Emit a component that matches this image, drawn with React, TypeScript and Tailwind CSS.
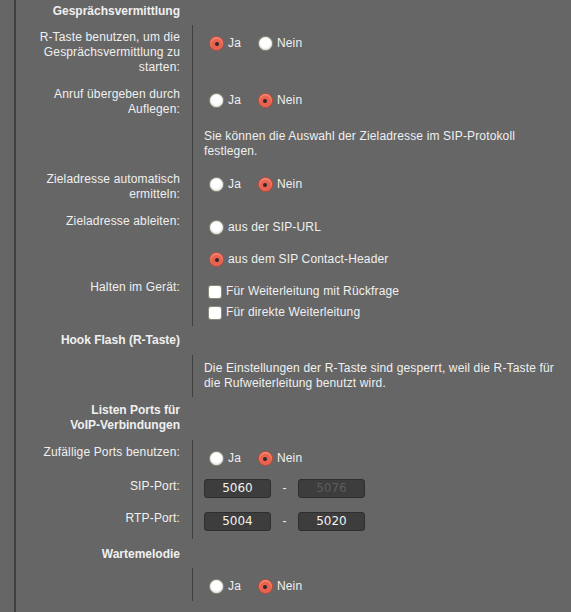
import type { ReactNode } from 'react';

function Radio({ checked, label }: { checked?: boolean; label: string }) {
  return (
    <label className="flex items-center">
      {checked ? (
        <span className="flex h-[13px] w-[13px] items-center justify-center rounded-full bg-[#e9614f] shadow-[0_0_0_1px_#b94a3c,inset_0_1px_2px_#f7a08f]">
          <span className="h-[4px] w-[4px] rounded-full bg-[#2a2a2a]" />
        </span>
      ) : (
        <span className="h-[13px] w-[13px] rounded-full bg-white shadow-[0_0_0_1px_#8a8a7a,inset_0_-1px_2px_#d8d8d0]" />
      )}
      <span className="ml-[5px]">{label}</span>
    </label>
  );
}

function Checkbox({ label }: { label: string }) {
  return (
    <label className="flex items-center">
      <span className="h-[12px] w-[12px] rounded-[2px] bg-white shadow-[0_0_0_1px_#8a8a7a]" />
      <span className="ml-[5px]">{label}</span>
    </label>
  );
}

function YesNo({ yes }: { yes: boolean }) {
  return (
    <div className="flex gap-[18px] pl-[6px]">
      <Radio checked={yes} label="Ja" />
      <Radio checked={!yes} label="Nein" />
    </div>
  );
}

function Heading({ children, className = '' }: { children: ReactNode; className?: string }) {
  return (
    <div className="flex">
      <div className={`w-[176px] pr-[12px] text-right font-bold ${className}`}>{children}</div>
    </div>
  );
}

function Row({
  label,
  children,
  labelPad = 'pt-[5px]',
  valuePad = 'pt-[11px]',
  height,
}: {
  label?: ReactNode;
  children: ReactNode;
  labelPad?: string;
  valuePad?: string;
  height: string;
}) {
  return (
    <div className={`flex ${height} tracking-[0.15px]`}>
      <div className={`w-[176px] shrink-0 pr-[12px] text-right ${labelPad}`}>{label}</div>
      <div className={`flex-1 border-l border-[#3f3f3f] pl-[11px] ${valuePad}`}>{children}</div>
    </div>
  );
}

function PortInput({ value, disabled }: { value: string; disabled?: boolean }) {
  return (
    <div
      className={`flex h-[19px] w-[67px] items-center justify-center rounded-[3px] border border-[#2e2e2e] bg-[#3d3d3d] font-['DejaVu_Sans',sans-serif] text-[12px] tracking-normal ${
        disabled ? 'text-[#5c5c5c]' : 'text-[#f2f2f2]'
      }`}
    >
      {value}
    </div>
  );
}

function PortRange({ from, to, toDisabled }: { from: string; to: string; toDisabled?: boolean }) {
  return (
    <div className="flex items-center">
      <PortInput value={from} />
      <span className="w-[27px] text-center">-</span>
      <PortInput value={to} disabled={toDisabled} />
    </div>
  );
}

export default function App() {
  return (
    <div className="h-[612px] w-[571px] overflow-hidden bg-[#666666] font-['Liberation_Sans',Arial,sans-serif] text-[12px] leading-[15px] text-[#f0f0f0]">
      <div className="ml-[14px] h-full border-l-2 border-[#404040]">
        <Heading className="h-[25px] pt-[4px]">Gesprächsvermittlung</Heading>

        <Row height="h-[57px]" label={<>R-Taste benutzen, um die<br />Gesprächsvermittlung zu<br />starten:</>}>
          <YesNo yes />
        </Row>
        <Row height="h-[42px]" label={<>Anruf übergeben durch<br />Auflegen:</>}>
          <YesNo yes={false} />
        </Row>
        <Row height="h-[43px]" valuePad="pt-[5px]">
          Sie können die Auswahl der Zieladresse im SIP-Protokoll
          <br />
          festlegen.
        </Row>
        <Row height="h-[42px]" valuePad="pt-[10px]" label={<>Zieladresse automatisch<br />ermitteln:</>}>
          <YesNo yes={false} />
        </Row>
        <Row height="h-[66px]" label="Zieladresse ableiten:" valuePad="pt-[11px]">
          <div className="flex flex-col gap-[17px] pl-[6px]">
            <Radio label="aus der SIP-URL" />
            <Radio checked label="aus dem SIP Contact-Header" />
          </div>
        </Row>
        <Row height="h-[51px]" label="Halten im Gerät:" valuePad="pt-[9px]">
          <div className="flex flex-col gap-[6px] pl-[5px]">
            <Checkbox label="Für Weiterleitung mit Rückfrage" />
            <Checkbox label="Für direkte Weiterleitung" />
          </div>
        </Row>

        <Heading className="h-[29px] pt-[7px]">Hook Flash (R-Taste)</Heading>
        <Row height="h-[42px]" valuePad="pt-[6px]">
          Die Einstellungen der R-Taste sind gesperrt, weil die R-Taste für
          <br />
          die Rufweiterleitung benutzt wird.
        </Row>

        <Heading className="h-[43px] pt-[6px]">
          Listen Ports für
          <br />
          VoIP-Verbindungen
        </Heading>
        <Row height="h-[33px]" label="Zufällige Ports benutzen:" valuePad="pt-[11px]">
          <YesNo yes={false} />
        </Row>
        <Row height="h-[33px]" label="SIP-Port:" valuePad="pt-[6px]" labelPad="pt-[6px]">
          <PortRange from="5060" to="5076" toDisabled />
        </Row>
        <Row height="h-[33px]" label="RTP-Port:" valuePad="pt-[6px]" labelPad="pt-[5px]">
          <PortRange from="5004" to="5020" />
        </Row>

        <Heading className="h-[29px] pt-[8px]">Wartemelodie</Heading>
        <Row height="h-[33px]" valuePad="pt-[11px]">
          <YesNo yes={false} />
        </Row>
      </div>
    </div>
  );
}
